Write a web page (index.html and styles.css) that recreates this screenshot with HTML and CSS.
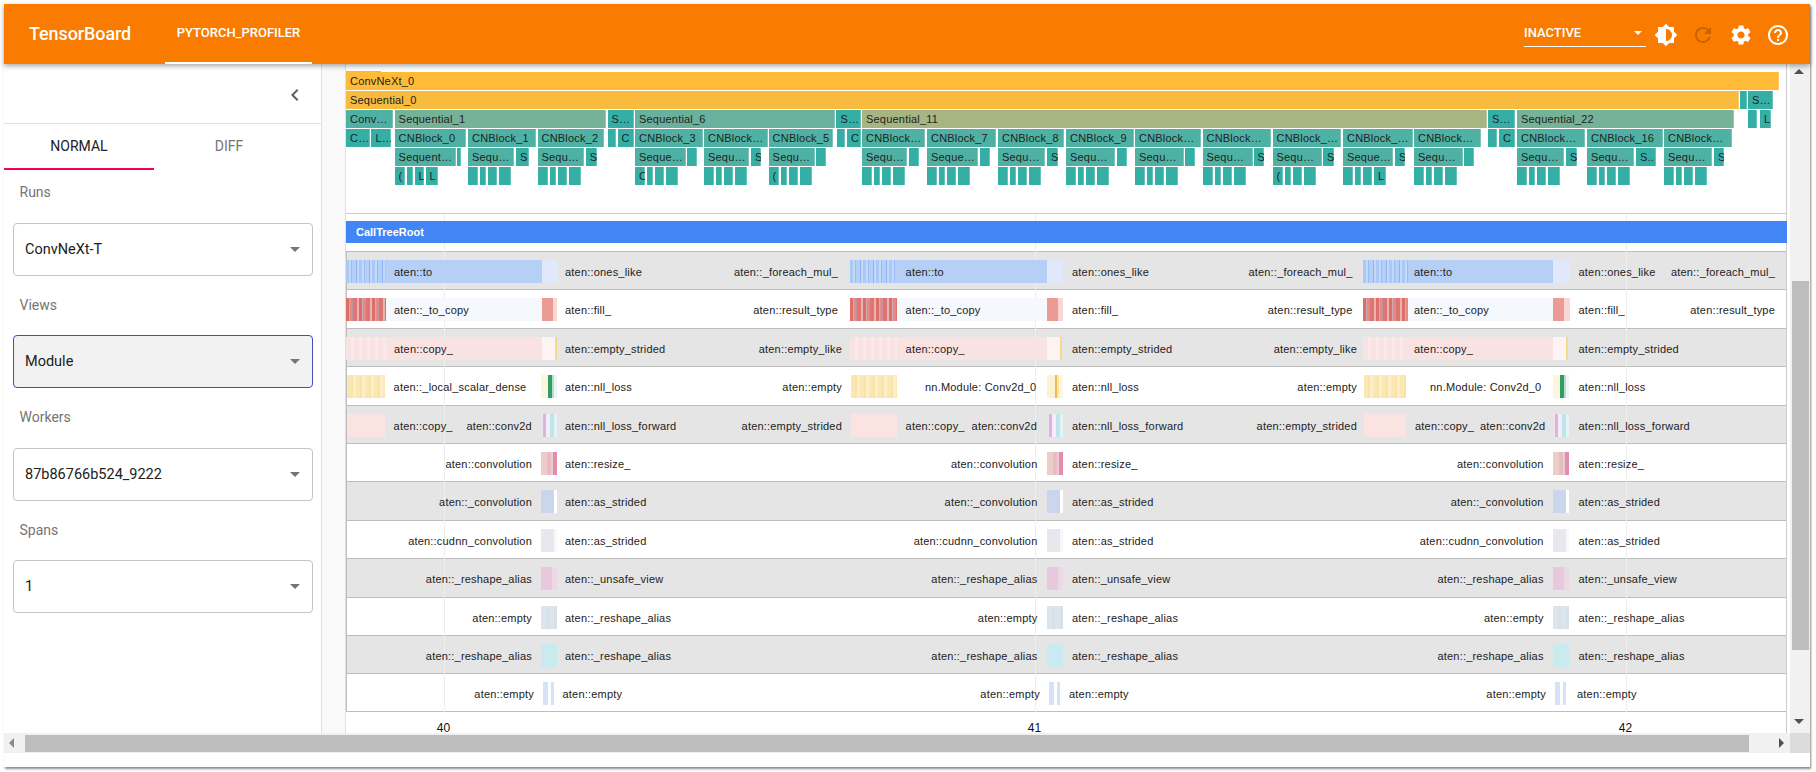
FILE: index.html
```html
<!DOCTYPE html>
<html>
<head>
  <meta charset="utf-8">
  <title>TensorBoard</title>
  <link rel="stylesheet" href="styles.css">
</head>
<body>
  <div class="window">
    <header class="topbar">
      <div class="brand">TensorBoard</div>
      <div class="plugin-tab">PYTORCH_PROFILER</div>
      <div class="topbar-right">
        <div class="plugin-select">
          <span>INACTIVE</span>
          <i class="caret caret-white"></i>
        </div>
        <button class="icon-btn">
          <svg viewBox="0 0 24 24"><path d="M20 15.31L23.31 12 20 8.69V4h-4.69L12 .69 8.69 4H4v4.69L.69 12 4 15.31V20h4.69L12 23.31 15.31 20H20v-4.69zM12 18V6c3.31 0 6 2.69 6 6s-2.69 6-6 6z"/></svg>
        </button>
        <button class="icon-btn icon-off">
          <svg viewBox="0 0 24 24"><path d="M17.65 6.35C16.2 4.9 14.21 4 12 4c-4.42 0-7.99 3.58-7.99 8s3.57 8 7.99 8c3.73 0 6.84-2.55 7.73-6h-2.08c-.82 2.33-3.04 4-5.65 4-3.31 0-6-2.69-6-6s2.69-6 6-6c1.66 0 3.14.69 4.22 1.78L13 11h7V4l-2.35 2.35z"/></svg>
        </button>
        <button class="icon-btn">
          <svg viewBox="0 0 24 24"><path d="M19.14 12.94c.04-.3.06-.61.06-.94 0-.32-.02-.64-.07-.94l2.03-1.58c.18-.14.23-.41.12-.61l-1.92-3.32c-.12-.22-.37-.29-.59-.22l-2.39.96c-.5-.38-1.03-.7-1.62-.94l-.36-2.54c-.04-.24-.24-.41-.48-.41h-3.84c-.24 0-.43.17-.47.41l-.36 2.54c-.59.24-1.13.57-1.62.94l-2.39-.96c-.22-.08-.47 0-.59.22L2.74 8.87c-.12.21-.08.47.12.61l2.03 1.58c-.05.3-.09.63-.09.94s.02.64.07.94l-2.03 1.58c-.18.14-.23.41-.12.61l1.92 3.32c.12.22.37.29.59.22l2.39-.96c.5.38 1.03.7 1.62.94l.36 2.54c.05.24.24.41.48.41h3.84c.24 0 .44-.17.47-.41l.36-2.54c.59-.24 1.13-.56 1.62-.94l2.39.96c.22.08.47 0 .59-.22l1.92-3.32c.12-.22.07-.47-.12-.61l-2.01-1.58zM12 15.6c-1.98 0-3.6-1.62-3.6-3.6s1.62-3.6 3.6-3.6 3.6 1.62 3.6 3.6-1.62 3.6-3.6 3.6z"/></svg>
        </button>
        <button class="icon-btn">
          <svg viewBox="0 0 24 24"><path d="M11 18h2v-2h-2v2zm1-16C6.48 2 2 6.48 2 12s4.48 10 10 10 10-4.48 10-10S17.52 2 12 2zm0 18c-4.41 0-8-3.59-8-8s3.59-8 8-8 8 3.59 8 8-3.59 8-8 8zm0-14c-2.21 0-4 1.79-4 4h2c0-1.1.9-2 2-2s2 .9 2 2c0 2-3 1.75-3 5h2c0-2.25 3-2.5 3-5 0-2.21-1.79-4-4-4z"/></svg>
        </button>
      </div>
    </header>

    <div class="main">
      <aside class="sidebar">
        <div class="collapse-row">
          <svg class="chevron" viewBox="0 0 24 24"><path d="M15.41 7.41L14 6l-6 6 6 6 1.41-1.41L10.83 12z"/></svg>
        </div>
        <div class="tabs">
          <div class="tab tab-active">NORMAL</div>
          <div class="tab">DIFF</div>
        </div>
        <div class="field field-first">
          <div class="field-label">Runs</div>
          <div class="select"><span>ConvNeXt-T</span><i class="caret"></i></div>
        </div>
        <div class="field">
          <div class="field-label">Views</div>
          <div class="select select-focus"><span>Module</span><i class="caret"></i></div>
        </div>
        <div class="field">
          <div class="field-label">Workers</div>
          <div class="select"><span>87b86766b524_9222</span><i class="caret"></i></div>
        </div>
        <div class="field">
          <div class="field-label">Spans</div>
          <div class="select"><span>1</span><i class="caret"></i></div>
        </div>
      </aside>

      <div class="gutter"></div>

      <section class="chart">
        <div class="flame" id="flame"></div>
        <div class="calltree" id="calltree">
          <div class="root-track"><div class="root-bar">CallTreeRoot</div></div>
          <div id="tracks"></div>
          <div class="ruler" id="ruler"></div>
        </div>
      </section>

      <div class="vscroll">
        <i class="arrow arrow-up"></i>
        <div class="vthumb"></div>
        <i class="arrow arrow-down"></i>
      </div>
    </div>

    <div class="hscroll">
      <i class="arrow arrow-left"></i>
      <div class="hthumb"></div>
      <i class="arrow arrow-right"></i>
      <div class="corner"></div>
    </div>
  </div>

  <script src="script.js"></script>
</body>
</html>
```

FILE: styles.css
```css
html, body {
  margin: 0;
  height: 100%;
  background-color: #ffffff;
  overflow: hidden;
}
body {
  font-family: Roboto, "Liberation Sans", sans-serif;
  color: #212121;
}
.window {
  margin: 4px 6px 0 4px;
  height: 763px;
  display: flex;
  flex-direction: column;
  box-shadow: 1px 2px 2px rgba(0, 0, 0, 0.45);
}

/* top bar */
.topbar {
  height: 60px;
  flex: none;
  display: flex;
  align-items: center;
  background-color: #f97c00;
  color: #ffffff;
  box-shadow: 0 2px 5px rgba(0, 0, 0, 0.35);
  position: relative;
  z-index: 5;
}
.brand {
  margin-left: 25px;
  font-size: 18px;
  font-weight: 500;
  letter-spacing: -0.1px;
  width: 136px;
  margin-top: -2px;
}
.plugin-tab {
  width: 147px;
  height: 60px;
  box-sizing: border-box;
  line-height: 58px;
  text-align: center;
  font-size: 13px;
  font-weight: 500;
  border-bottom: 2px solid #ffffff;
}
.topbar-right {
  margin-left: auto;
  display: flex;
  align-items: center;
  margin-right: 13px;
}
.plugin-select {
  width: 122px;
  height: 26px;
  box-sizing: border-box;
  border-bottom: 1px solid #ffffff;
  font-size: 13px;
  font-weight: 500;
  line-height: 20px;
  display: flex;
  align-items: center;
  justify-content: space-between;
  padding-right: 4px;
  margin-right: 1px;
  margin-top: -1px;
}
.icon-btn {
  width: 37.5px;
  height: 24px;
  border: 0;
  padding: 0;
  background: none;
  fill: #ffffff;
  display: flex;
  justify-content: center;
  margin-top: 2px;
}
.icon-btn svg {
  width: 24px;
  height: 24px;
}
.icon-off {
  fill: #c76300;
}
.caret {
  width: 0;
  height: 0;
  border-left: 5px solid transparent;
  border-right: 5px solid transparent;
  border-top: 5px solid #757575;
}
.caret-white {
  border-left-width: 4px;
  border-right-width: 4px;
  border-top: 4px solid #ffffff;
}

/* sidebar */
.main {
  height: 669px;
  flex: none;
  display: flex;
}
.sidebar {
  width: 318px;
  flex: none;
  box-sizing: border-box;
  border-right: 1px solid #e0e0e0;
  background-color: #ffffff;
}
.collapse-row {
  height: 60px;
  box-sizing: border-box;
  border-bottom: 1px solid #e0e0e0;
  display: flex;
  align-items: center;
  justify-content: flex-end;
  padding-right: 14px;
}
.chevron {
  width: 24px;
  height: 24px;
  fill: #616161;
  margin-top: 2px;
}
.tabs {
  display: flex;
  height: 46px;
}
.tab {
  width: 150px;
  text-align: center;
  font-size: 14px;
  line-height: 44px;
  color: #757575;
  box-sizing: border-box;
}
.tab-active {
  color: #212121;
  border-bottom: 2px solid #f50057;
}
.field {
  padding: 0 8.5px;
}
.field-label {
  margin: 18px 0 19.5px 7px;
  font-size: 14px;
  line-height: 22px;
  color: #757575;
}
.field-first .field-label {
  margin-top: 11px;
}
.select {
  height: 53px;
  box-sizing: border-box;
  border: 1px solid #c4c4c4;
  border-radius: 4px;
  display: flex;
  align-items: center;
  justify-content: space-between;
  padding: 0 12px 0 11.5px;
  font-size: 14.5px;
}
.select-focus {
  background-color: #f2f2f2;
  border-color: #3f51b5;
}

/* timeline */
.gutter {
  width: 24px;
  flex: none;
  background-color: #f9f9f9;
  border-right: 1px solid #e0e0e0;
  box-sizing: border-box;
}
.chart {
  width: 1441px;
  flex: none;
  background-color: #ffffff;
  font-family: "Liberation Sans", Arial, sans-serif;
  overflow: hidden;
}
.flame {
  height: 149px;
  position: relative;
}
.flame-cap {
  position: absolute;
  left: 0;
  top: 7px;
  width: 35px;
  height: 1px;
  background-color: #bdbdbd;
}
.slice {
  position: absolute;
  height: 18px;
  box-sizing: border-box;
  padding-left: 4px;
  font-size: 11px;
  letter-spacing: 0.2px;
  line-height: 18px;
  color: #222222;
  white-space: nowrap;
  overflow: hidden;
  box-shadow: inset -1px 0 rgba(255, 255, 255, 0.25);
}
.f-amber { background-color: #ffbb38; }
.f-amber2 { background-color: #f9bb3e; }
.f-teal { background-color: #35afa5; }
.f-teal2 { background-color: #4eb1a3; }
.f-seq1 { background-color: #75b297; }
.f-seq6 { background-color: #69b19d; }
.f-seq11 { background-color: #a6b581; }

.calltree {
  position: relative;
  border-top: 1px solid #cccccc;
}
.root-track {
  height: 37px;
  box-sizing: border-box;
  padding-top: 7px;
}
.root-bar {
  height: 22px;
  background-color: #4285f4;
  color: #ffffff;
  font-size: 11px;
  font-weight: 700;
  line-height: 22px;
  padding-left: 10px;
  position: relative;
  z-index: 1;
}
.track {
  height: 38.4px;
  box-sizing: border-box;
  border-top: 1px solid #bdbdbd;
  box-shadow: inset 1px 0 #bdbdbd;
  position: relative;
}
.track-last {
  border-bottom: 1px solid #bdbdbd;
}
.track-grey {
  background-color: #e5e5e5;
}
.gridline {
  position: absolute;
  top: 0;
  bottom: 21px;
  width: 1px;
  background-color: #eeeeee;
}
.bar {
  position: absolute;
  top: 8px;
  height: 23px;
  z-index: 1;
}
.label {
  position: absolute;
  top: 0;
  line-height: 40px;
  font-size: 11px;
  letter-spacing: 0.2px;
  color: #222222;
  white-space: nowrap;
  z-index: 2;
}
.ruler {
  height: 21px;
  position: relative;
  overflow: hidden;
}
.tick {
  position: absolute;
  top: 8px;
  width: 40px;
  margin-left: -20px;
  text-align: center;
  font-size: 12px;
  line-height: 16px;
  color: #111111;
}

/* bar fills */
.c-blue-s { background: repeating-linear-gradient(90deg, #abc9f6 0 3px, #c4d9f9 3px 5px, #9abdf4 5px 6px, #b5cff7 6px 10px, #8db5f2 10px 11px, #c4d9f9 11px 13px); }
.c-blue { background-color: #b5cff7; }
.c-blue-e { background-color: #dfe9fb; }
.c-red-s { background: repeating-linear-gradient(90deg, #dd6f6a 0 3px, #d0a9b8 3px 4px, #e58a84 4px 6px, #c2909f 6px 7px, #de7570 7px 11px, #e9b4b0 11px 13px); }
.c-ice { background-color: #f5f9fe; }
.c-red-e { background: linear-gradient(90deg, #ec9a94 0 11px, #f8d7d5 11px); }
.c-pink-s { background: repeating-linear-gradient(90deg, #f9e3e2 0 5px, #fae9e8 5px 8px); }
.c-pink-flat { background-color: #fae3e1; }
.c-pink { background-color: #f9e3e2; }
.c-pink-e { background: linear-gradient(90deg, #fdf3f2 0 13px, #f7d98a 13px 15px, #ffffff00 15px); }
.c-yel-s { background: repeating-linear-gradient(90deg, #fbe7b3 0 4px, #fae3a9 4px 6px, #fdeec9 6px 9px); }
.c-green-e { background: linear-gradient(90deg, #fdf6dc 0 7px, #2e9e62 7px 11px, #b9ded0 11px 13px, #eef6f3 13px); }
.c-amber-e { background: linear-gradient(90deg, #fdf1cf 0 8px, #f2b94e 8px 10px, #fbe7b3 10px 12px, #fdf6dc 12px); }
.c-lilac-e { background: linear-gradient(90deg, #f0e0f0 0 2px, #d8b7dc 2px 5px, #f6ecf7 5px 9px, #bfe5ea 9px 13px, #e2f4f6 13px); }
.c-rose-e { background: linear-gradient(90deg, #edcdc8 0 6px, #e8bcc4 6px 10px, #e9d0cf 10px 12px, #e58bab 12px); }
.c-peri-e { background: linear-gradient(90deg, #c9d6ee 0 13px, #ffffff 13px); }
.c-mist-e { background: linear-gradient(90deg, #eae6ee 0 13px, #f8f8fa 13px); }
.c-orch-e { background: linear-gradient(90deg, #e8c8dc 0 11px, #edd8e6 11px); }
.c-slate-e { background: repeating-linear-gradient(90deg, #dde5ec 0 5px, #d8e0e8 5px 8px); }
.c-aqua-e { background-color: #c9ebef; }
.c-sky { background-color: #d4e2fa; }

/* scrollbars */
.vscroll {
  flex: 1;
  position: relative;
  background-color: #f1f1f1;
  border-left: 3px solid #ffffff;
  box-shadow: -1px 0 #cccccc;
}
.vthumb {
  position: absolute;
  left: 2px;
  right: 1px;
  top: 217px;
  height: 369px;
  background-color: #bdbdbd;
}
.hscroll {
  height: 20px;
  flex: none;
  position: relative;
  background-color: #f1f1f1;
}
.hthumb {
  position: absolute;
  left: 21px;
  width: 1724px;
  top: 2px;
  height: 17px;
  background-color: #bdbdbd;
}
.corner {
  position: absolute;
  right: 0;
  top: 0;
  width: 20px;
  height: 20px;
  background-color: #dcdcdc;
}
.arrow {
  position: absolute;
  width: 0;
  height: 0;
  border: 5px solid transparent;
}
.arrow-up {
  top: 5px;
  left: 4px;
  border-top-width: 0;
  border-bottom-color: #505050;
}
.arrow-down {
  bottom: 9px;
  left: 4px;
  border-bottom-width: 0;
  border-top-color: #505050;
}
.arrow-left {
  left: 5px;
  top: 5px;
  border-left-width: 0;
  border-right-color: #8a8a8a;
}
.arrow-right {
  right: 26px;
  top: 5px;
  border-right-width: 0;
  border-left-color: #505050;
}
```

FILE: script.js
```js
// screen x of the left edge of the chart
const X0 = 346;

// flame rows: [from, to, colour, text]
const flameRows = [
  [[346, 1779, 'f-amber', 'ConvNeXt_0']],
  [[346, 1739, 'f-amber2', 'Sequential_0'], [1740, 1747, 'f-teal', ''], [1748, 1773, 'f-teal', 'S…']],
  [
    [346, 393, 'f-teal2', 'Conv…'], [394.6, 606, 'f-seq1', 'Sequential_1'], [607.5, 634, 'f-teal', 'S…'],
    [635, 835, 'f-seq6', 'Sequential_6'], [836.4, 861, 'f-teal', 'S…'], [862, 1487, 'f-seq11', 'Sequential_11'],
    [1488, 1515, 'f-teal', 'S…'], [1517, 1734, 'f-seq1', 'Sequential_22'], [1748, 1757, 'f-teal', ''], [1760, 1771, 'f-teal', 'L']
  ],
  [
    [346, 370, 'f-teal', 'C…'], [371.4, 391.4, 'f-teal', 'L…'], [394.6, 466.4, 'f-teal2', 'CNBlock_0'],
    [468, 536, 'f-teal2', 'CNBlock_1'], [537.5, 604, 'f-teal2', 'CNBlock_2'], [608, 616, 'f-teal', ''],
    [617.5, 633.6, 'f-teal', 'C'], [635, 703, 'f-teal2', 'CNBlock_3'], [704, 767.5, 'f-teal2', 'CNBlock…'],
    [768.6, 833, 'f-teal2', 'CNBlock_5'], [837, 845, 'f-teal', ''], [847, 861, 'f-teal', 'C'],
    [862, 925, 'f-teal2', 'CNBlock…'], [927, 996.4, 'f-teal2', 'CNBlock_7'], [998, 1064, 'f-teal2', 'CNBlock_8'],
    [1066, 1134, 'f-teal2', 'CNBlock_9'], [1135, 1201, 'f-teal2', 'CNBlock…'], [1202.5, 1271, 'f-teal2', 'CNBlock…'],
    [1272.5, 1341, 'f-teal2', 'CNBlock_…'], [1343, 1412.5, 'f-teal2', 'CNBlock_…'], [1414, 1481, 'f-teal2', 'CNBlock…'],
    [1488, 1497, 'f-teal', ''], [1499, 1515, 'f-teal', 'C'], [1517, 1585, 'f-teal2', 'CNBlock…'],
    [1587, 1663, 'f-teal2', 'CNBlock_16'], [1664, 1732, 'f-teal2', 'CNBlock…']
  ],
  [
    [394.6, 456, 'f-teal2', 'Sequent…'], [456.8, 458, 'f-teal', ''], [468, 514, 'f-teal2', 'Sequ…'], [516, 529, 'f-teal', 'S'],
    [537.5, 584, 'f-teal2', 'Sequ…'], [585.7, 597, 'f-teal', 'S'], [635, 686, 'f-teal2', 'Seque…'], [687, 697, 'f-teal', ''],
    [704, 749, 'f-teal2', 'Sequ…'], [751, 761, 'f-teal', 'S'], [768.6, 815, 'f-teal2', 'Sequ…'], [816, 826, 'f-teal', ''],
    [862, 907, 'f-teal2', 'Sequ…'], [908.6, 918.6, 'f-teal', ''], [927, 978, 'f-teal2', 'Seque…'], [980, 990, 'f-teal', ''],
    [998, 1045, 'f-teal2', 'Sequ…'], [1047, 1057.5, 'f-teal', 'S'], [1066, 1115, 'f-teal2', 'Sequ…'], [1117, 1127, 'f-teal', ''],
    [1135, 1184, 'f-teal2', 'Sequ…'], [1185, 1195, 'f-teal', ''], [1202.5, 1252.5, 'f-teal2', 'Sequ…'], [1253.6, 1264, 'f-teal', 'S'],
    [1272.5, 1322, 'f-teal2', 'Sequ…'], [1323, 1334, 'f-teal', 'S'], [1343, 1393, 'f-teal2', 'Seque…'], [1395, 1405, 'f-teal', 'S'],
    [1414, 1463, 'f-teal2', 'Sequ…'], [1464, 1474, 'f-teal', ''], [1517, 1564, 'f-teal2', 'Sequ…'], [1566, 1577, 'f-teal', 'S'],
    [1587, 1634, 'f-teal2', 'Sequ…'], [1636, 1656, 'f-teal', 'S..'], [1664, 1712, 'f-teal2', 'Sequ…'], [1714, 1724, 'f-teal', 'S']
  ],
  []
];

// small boxes under each CNBlock, same rhythm every time
const blockStarts = {
  394.6: ['(', '', 'L.', 'L'], 468: [], 537.5: [], 635: ['C'], 704: [], 768.6: ['('], 862: [], 927: [], 998: [],
  1066: [], 1135: [], 1202.5: [], 1272.5: ['('], 1343: ['', '', '', 'L'], 1414: [], 1517: [], 1587: [], 1664: []
};
const boxes = [[0, 10], [12, 18], [20, 29], [31, 43]];
Object.keys(blockStarts).forEach(function (key) {
  const start = parseFloat(key);
  boxes.forEach(function (b, i) {
    flameRows[5].push([start + b[0], start + b[1], 'f-teal', blockStarts[key][i] || '']);
  });
});

const flame = document.getElementById('flame');
const cap = document.createElement('div');
cap.className = 'flame-cap';
flame.appendChild(cap);
flameRows.forEach(function (row, r) {
  row.forEach(function (s) {
    const el = document.createElement('div');
    el.className = 'slice ' + s[2];
    el.style.left = (s[0] - X0) + 'px';
    el.style.width = (s[1] - s[0]) + 'px';
    el.style.top = (8 + r * 19) + 'px';
    el.textContent = s[3];
    flame.appendChild(el);
  });
});

// call tree tracks
const P = [0, 506, 1012];
const L1 = [394, 905.6, 1414];
const L2 = [565, 1072, 1578.5];
const R1 = [838, 1352.5, 1775];
const R2 = [842, 1357];
const R3 = [532, 1037.5, 1543.6];
const STRIPE = [[346, 386], [850, 897], [1363, 1408]];
const STRIPE2 = [[347, 385], [851, 897], [1364, 1406]];
const BODY = [[386, 542], [897, 1047], [1408, 1553]];
const TAIL = [[542, 557], [1047, 1063], [1553, 1570]];
const STUB = [[541, 557], [1047, 1063], [1553, 1569]];

function spans(list, cls) {
  return list.map(function (s, i) {
    return [s[0], s[1], Array.isArray(cls) ? cls[i] : cls];
  });
}
function at(text, xs, side) {
  return xs.map(function (x) { return [text, side, x]; });
}

const tracks = [
  {
    bars: spans(STRIPE, 'c-blue-s').concat(spans(BODY, 'c-blue'), spans(TAIL, 'c-blue-e')),
    labels: at('aten::to', L1, 'l').concat(at('aten::ones_like', L2, 'l'), at('aten::_foreach_mul_', R1, 'r'))
  },
  {
    bars: spans(STRIPE, 'c-red-s').concat(spans(BODY, 'c-ice'), spans(TAIL, 'c-red-e')),
    labels: at('aten::_to_copy', L1, 'l').concat(at('aten::fill_', L2, 'l'), at('aten::result_type', R1, 'r'))
  },
  {
    bars: spans(STRIPE, 'c-pink-s').concat(spans(BODY, 'c-pink'), spans(TAIL, 'c-pink-e')),
    labels: at('aten::copy_', L1, 'l').concat(at('aten::empty_strided', L2, 'l'), at('aten::empty_like', R2, 'r'))
  },
  {
    bars: spans(STRIPE2, 'c-yel-s').concat(spans(STUB, ['c-green-e', 'c-amber-e', 'c-green-e'])),
    labels: [['aten::_local_scalar_dense', 'l', 393.6], ['nn.Module: Conv2d_0', 'l', 925], ['nn.Module: Conv2d_0', 'l', 1430]]
      .concat(at('aten::nll_loss', L2, 'l'), at('aten::empty', R2, 'r'))
  },
  {
    bars: spans(STRIPE2, 'c-pink-flat').concat(spans(STUB, 'c-lilac-e')),
    labels: at('aten::copy_', [393.6, 905.6, 1415], 'l').concat(
      at('aten::conv2d', [466.4, 971.6, 1480], 'l'),
      at('aten::nll_loss_forward', L2, 'l'),
      at('aten::empty_strided', R2, 'r'))
  },
  { bars: spans(STUB, 'c-rose-e'), labels: at('aten::convolution', R3, 'r').concat(at('aten::resize_', L2, 'l')) },
  { bars: spans(STUB, 'c-peri-e'), labels: at('aten::_convolution', R3, 'r').concat(at('aten::as_strided', L2, 'l')) },
  { bars: spans(STUB, 'c-mist-e'), labels: at('aten::cudnn_convolution', R3, 'r').concat(at('aten::as_strided', L2, 'l')) },
  { bars: spans(STUB, 'c-orch-e'), labels: at('aten::_reshape_alias', R3, 'r').concat(at('aten::_unsafe_view', L2, 'l')) },
  { bars: spans(STUB, 'c-slate-e'), labels: at('aten::empty', R3, 'r').concat(at('aten::_reshape_alias', L2, 'l')) },
  { bars: spans(STUB, 'c-aqua-e'), labels: at('aten::_reshape_alias', R3, 'r').concat(at('aten::_reshape_alias', L2, 'l')) },
  {
    bars: spans(P.map(function (p) { return [543 + p, 548 + p]; }).concat(P.map(function (p) { return [551 + p, 554 + p]; })), 'c-sky'),
    labels: at('aten::empty', [534, 1040, 1546], 'r').concat(at('aten::empty', [562.5, 1069, 1577], 'l'))
  }
];

const holder = document.getElementById('tracks');
const chartWidth = 1441;
tracks.forEach(function (t, i) {
  const row = document.createElement('div');
  row.className = 'track' + (i % 2 === 0 ? ' track-grey' : '') + (i === tracks.length - 1 ? ' track-last' : '');
  t.bars.forEach(function (b) {
    const el = document.createElement('div');
    el.className = 'bar ' + b[2];
    el.style.left = (b[0] - X0) + 'px';
    el.style.width = (b[1] - b[0]) + 'px';
    row.appendChild(el);
  });
  t.labels.forEach(function (l) {
    const el = document.createElement('div');
    el.className = 'label';
    el.textContent = l[0];
    if (l[1] === 'l') {
      el.style.left = (l[2] - X0) + 'px';
    } else {
      el.style.right = (chartWidth - (l[2] - X0)) + 'px';
    }
    row.appendChild(el);
  });
  holder.appendChild(row);
});

// time grid
const calltree = document.getElementById('calltree');
const ruler = document.getElementById('ruler');
[[443.5, '40'], [1034.5, '41'], [1625.5, '42']].forEach(function (g) {
  const line = document.createElement('div');
  line.className = 'gridline';
  line.style.left = (g[0] - X0) + 'px';
  calltree.appendChild(line);
  const tick = document.createElement('div');
  tick.className = 'tick';
  tick.style.left = (g[0] - X0) + 'px';
  tick.textContent = g[1];
  ruler.appendChild(tick);
});
```
